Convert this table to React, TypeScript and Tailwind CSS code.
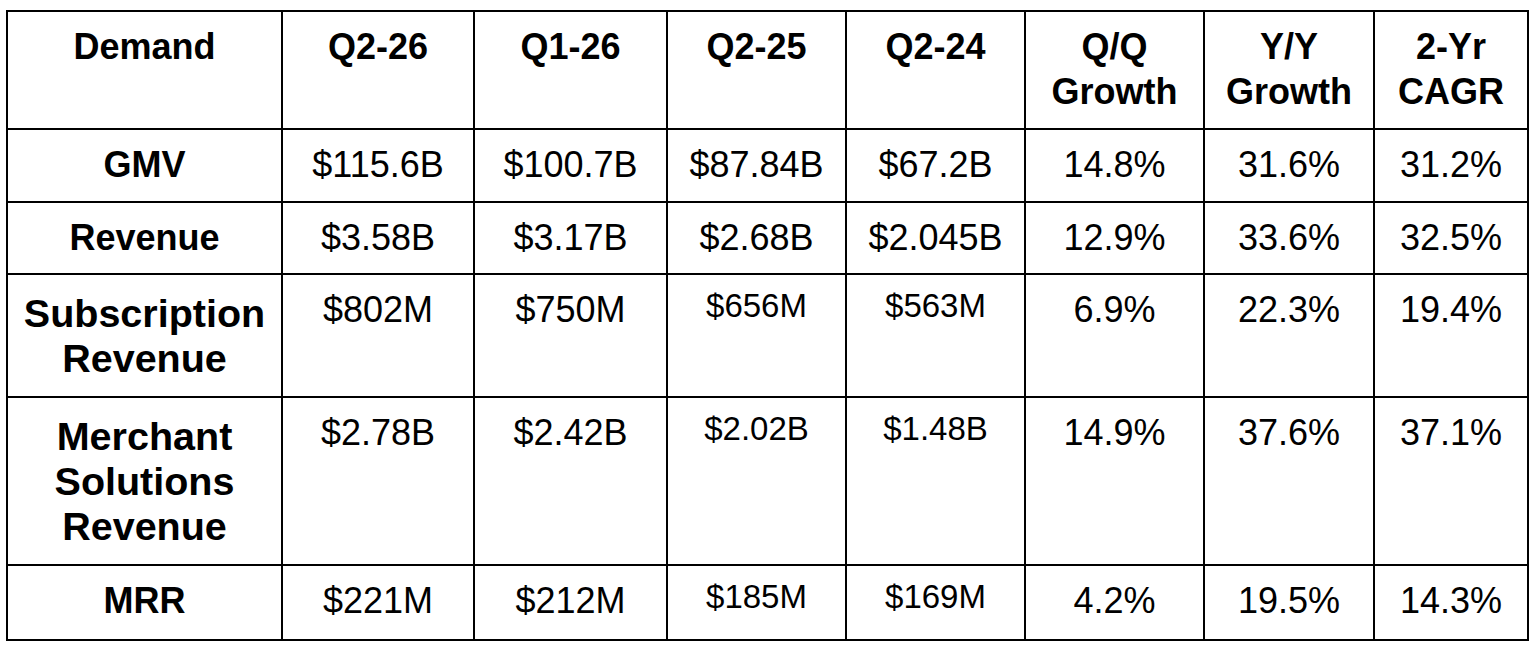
import React from "react";

type Cell = { text: string; small?: boolean };

const header = ["Demand", "Q2-26", "Q1-26", "Q2-25", "Q2-24", "Q/Q\nGrowth", "Y/Y\nGrowth", "2-Yr\nCAGR"];

const rows: { label: string; big?: boolean; cells: Cell[] }[] = [
  {
    label: "GMV",
    cells: [
      { text: "$115.6B" },
      { text: "$100.7B" },
      { text: "$87.84B" },
      { text: "$67.2B" },
      { text: "14.8%" },
      { text: "31.6%" },
      { text: "31.2%" },
    ],
  },
  {
    label: "Revenue",
    cells: [
      { text: "$3.58B" },
      { text: "$3.17B" },
      { text: "$2.68B" },
      { text: "$2.045B" },
      { text: "12.9%" },
      { text: "33.6%" },
      { text: "32.5%" },
    ],
  },
  {
    label: "Subscription\nRevenue",
    big: true,
    cells: [
      { text: "$802M" },
      { text: "$750M" },
      { text: "$656M", small: true },
      { text: "$563M", small: true },
      { text: "6.9%" },
      { text: "22.3%" },
      { text: "19.4%" },
    ],
  },
  {
    label: "Merchant\nSolutions\nRevenue",
    big: true,
    cells: [
      { text: "$2.78B" },
      { text: "$2.42B" },
      { text: "$2.02B", small: true },
      { text: "$1.48B", small: true },
      { text: "14.9%" },
      { text: "37.6%" },
      { text: "37.1%" },
    ],
  },
  {
    label: "MRR",
    cells: [
      { text: "$221M" },
      { text: "$212M" },
      { text: "$185M", small: true },
      { text: "$169M", small: true },
      { text: "4.2%" },
      { text: "19.5%" },
      { text: "14.3%" },
    ],
  },
];

function Lines({ text }: { text: string }) {
  return (
    <>
      {text.split("\n").map((l, i) => (
        <span key={i} className="block">
          {l}
        </span>
      ))}
    </>
  );
}

export default function App() {
  return (
    <div
      className="w-[1540px] h-[650px] bg-white pl-[6px] pt-[10px] text-black"
      style={{ fontFamily: '"Liberation Sans", Arial, Helvetica, sans-serif' }}
    >
      <div className="grid w-[1523px] grid-cols-[275px_192px_193px_179px_179px_179px_170px_154px] grid-rows-[118px_73px_72px_123px_168px_75px] border-l-2 border-t-2 border-black">
        {header.map((h, i) => (
          <div
            key={i}
            className="border-r-2 border-b-2 border-black pt-[12px] text-center text-[36px] leading-[45px] font-bold"
          >
            <Lines text={h} />
          </div>
        ))}
        {rows.map((r, ri) => (
          <React.Fragment key={ri}>
            <div
              className={
                r.big
                  ? "border-r-2 border-b-2 border-black pt-[16px] text-center text-[39.5px] leading-[45px] font-bold"
                  : "border-r-2 border-b-2 border-black pt-[12px] text-center text-[36px] leading-[45px] font-bold"
              }
            >
              <Lines text={r.label} />
            </div>
            {r.cells.map((c, ci) => (
              <div
                key={ci}
                className={
                  c.small
                    ? "border-r-2 border-b-2 border-black pt-[10px] text-center text-[33px] leading-[42px]"
                    : "border-r-2 border-b-2 border-black pt-[12px] text-center text-[36px] leading-[45px]"
                }
              >
                {c.text}
              </div>
            ))}
          </React.Fragment>
        ))}
      </div>
    </div>
  );
}
